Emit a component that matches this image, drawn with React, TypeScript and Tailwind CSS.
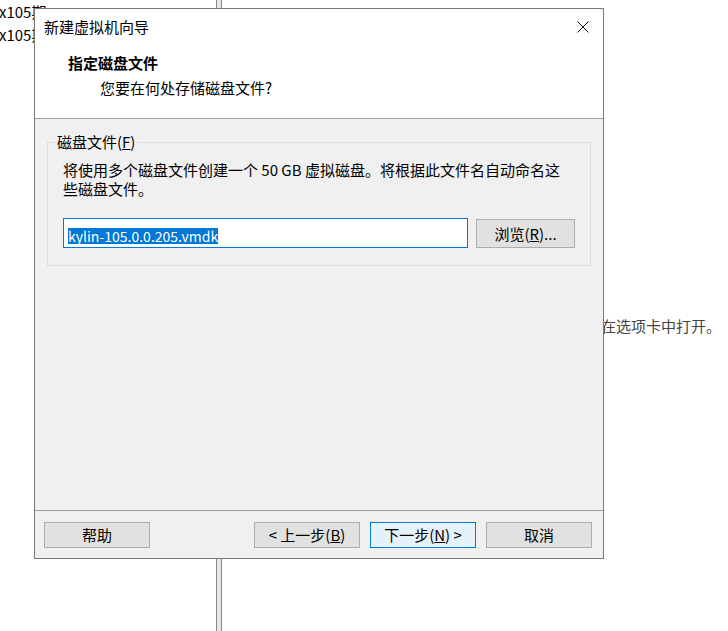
import React from 'react';

const ui = "font-['Microsoft_YaHei','Noto_Sans_CJK_SC',sans-serif]";

const Btn = ({ children, primary = false }: { children: React.ReactNode; primary?: boolean }) => (
  <button
    className={`h-[26px] w-[106px] border text-[15px] leading-[20px] text-black ${
      primary ? 'bg-[#e5f1fb] border-[#0078d7]' : 'bg-[#e1e1e1] border-[#adadad]'
    }`}
  >
    {children}
  </button>
);

const App = () => {
  return (
    <div className={`relative w-[728px] h-[631px] overflow-hidden bg-white ${ui}`}>
      {/* desktop behind the window */}
      <div className="absolute left-[-1px] top-[1px] text-[15px] leading-[22px] text-black">
        <div>x105期</div>
        <div className="mt-[1px]">x105期</div>
      </div>
      <div className="absolute left-[216px] top-0 h-[631px] w-[6px] border-x border-[#85858f] bg-[#e6e6ea]" />
      <div className="absolute left-[601px] top-[316px] text-[15px] leading-[20px] text-[#444]">在选项卡中打开。</div>

      {/* wizard window */}
      <div className="absolute left-[34px] top-[8px] w-[570px] h-[551px] border border-[#7a7a7a] flex flex-col text-black">
        {/* title + header */}
        <div className="h-[110px] bg-white border-b border-[#a0a0a0]">
          <div className="h-[36px] flex items-center justify-between pl-[9px] pr-[14px]">
            <span className="text-[15px] leading-[20px]">新建虚拟机向导</span>
            <svg width="12" height="12" viewBox="0 0 12 12" fill="none" stroke="#111" strokeWidth="1">
              <path d="M0.5 0.5 L11.5 11.5 M11.5 0.5 L0.5 11.5" />
            </svg>
          </div>
          <div className="pl-[33px] pt-[8px]">
            <div className="text-[15px] leading-[20px] font-bold">指定磁盘文件</div>
            <div className="pl-[32px] mt-[5px] text-[15px] leading-[20px]">您要在何处存储磁盘文件?</div>
          </div>
        </div>

        {/* body */}
        <div className="h-[391px] bg-[#f0f0f0] pt-[13px]">
          <fieldset className="mx-[12px] border border-[#dcdcdc] px-[15px] pb-[17px]">
            <legend className="-ml-[8px] px-[2px] text-[15px] leading-[20px]">
              磁盘文件(<span className="underline">F</span>)
            </legend>
            <p className="pt-[8px] text-[15px] leading-[19px]">
              将使用多个磁盘文件创建一个 50 GB 虚拟磁盘。将根据此文件名自动命名这
              <br />
              些磁盘文件。
            </p>
            <div className="mt-[20px] flex items-start">
              <div className="h-[30px] w-[405px] border border-[#0078d7] bg-white pl-[4px] pt-[4px]">
                <span className="bg-[#0078d7] text-white text-[14px] leading-[16px] inline-block">
                  kylin-105.0.0.205.vmdk
                </span>
              </div>
              <button className="ml-[8px] mt-[1px] h-[29px] w-[99px] border border-[#adadad] bg-[#e1e1e1] text-[15px] leading-[20px]">
                浏览(<span className="underline">R</span>)...
              </button>
            </div>
          </fieldset>
        </div>

        {/* footer */}
        <div className="flex-1 bg-[#f0f0f0] border-t border-[#a0a0a0] flex items-start justify-between pt-[11px] pl-[9px] pr-[11px]">
          <Btn>帮助</Btn>
          <div className="flex gap-[10px]">
            <Btn>
              &lt; 上一步(<span className="underline">B</span>)
            </Btn>
            <Btn primary>
              下一步(<span className="underline">N</span>) &gt;
            </Btn>
            <Btn>取消</Btn>
          </div>
        </div>
      </div>
    </div>
  );
};

export default App;
